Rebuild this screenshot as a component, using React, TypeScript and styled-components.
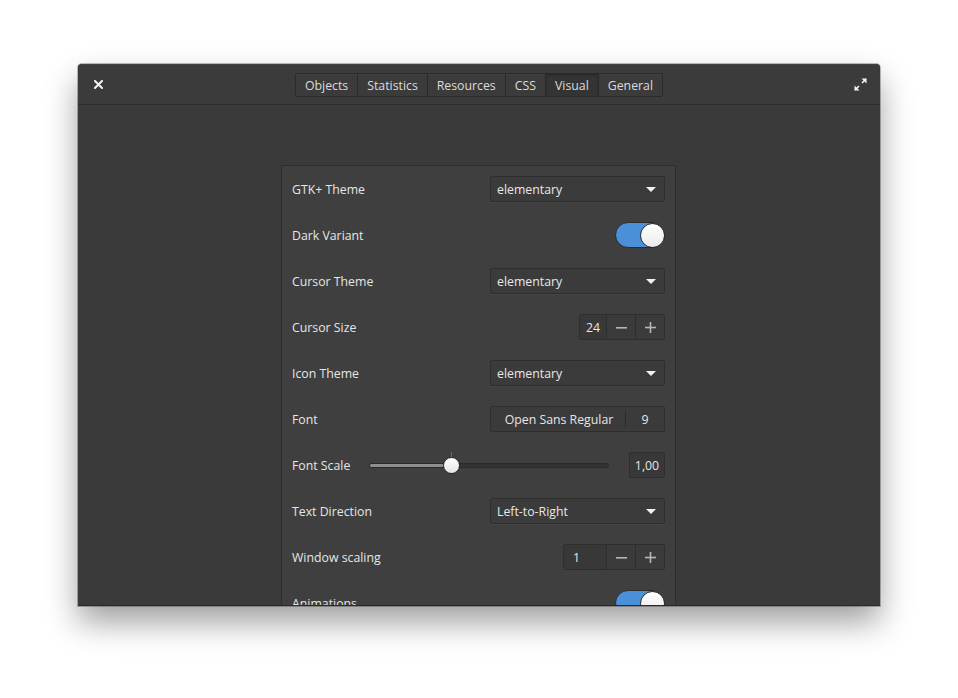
import React from "react";
import styled, { createGlobalStyle } from "styled-components";

const Global = createGlobalStyle`
  html, body { margin: 0; padding: 0; background: #ffffff; }
  body { font-family: "Open Sans", "Noto Sans", sans-serif; font-size: 12px; }
  * { box-sizing: border-box; }
`;

const Page = styled.div`
  width: 958px;
  height: 698px;
  padding: 64px 0 0 78px;
  overflow: hidden;
  background: #ffffff;
`;

const Window = styled.div`
  width: 802px;
  height: 542px;
  display: flex;
  flex-direction: column;
  background: #3a3a3a;
  border-radius: 4px 4px 0 0;
  border-bottom: 1px solid #2a2a2a;
  box-shadow: 0 16px 32px rgba(0, 0, 0, 0.38), 0 0 0 1px rgba(0, 0, 0, 0.25);
  overflow: hidden;
`;

const HeaderBar = styled.div`
  height: 41px;
  flex: none;
  display: grid;
  grid-template-columns: 40px 1fr 40px;
  align-items: center;
  background: #3b3b3b;
  border-bottom: 1px solid #2c2c2c;
  box-shadow: inset 0 1px 0 rgba(255, 255, 255, 0.04);
`;

const IconButton = styled.div`
  display: flex;
  align-items: center;
  justify-content: center;
  height: 40px;
  color: #f0f0f0;
`;

const Switcher = styled.div`
  justify-self: center;
  display: flex;
  height: 24px;
  margin-top: 2px;
  border: 1px solid #2b2b2b;
  border-radius: 2px;
  overflow: hidden;
`;

const Tab = styled.div<{ $active?: boolean }>`
  display: flex;
  align-items: center;
  padding: 0 9px;
  color: #dcdcdc;
  font-size: 12.3px;
  background: ${(p) => (p.$active ? "#343434" : "#3b3b3b")};
  box-shadow: ${(p) => (p.$active ? "inset 0 1px 2px rgba(0,0,0,0.25)" : "inset 0 1px 0 rgba(255,255,255,0.03)")};
  & + & { border-left: 1px solid #2b2b2b; }
`;

const Content = styled.div`
  flex: 1;
  display: flex;
  justify-content: center;
  padding: 60px 1px 0 0;
  background: #3a3a3a;
  overflow: hidden;
`;

const Panel = styled.div`
  width: 395px;
  align-self: flex-start;
  display: flex;
  flex-direction: column;
  gap: 20px;
  padding: 10px 10px 20px;
  background: #3f3f3f;
  border: 1px solid #2e2e2e;
  border-bottom: none;
`;

const Row = styled.div`
  height: 26px;
  display: flex;
  align-items: center;
  gap: 10px;
`;

const Label = styled.div`
  color: #e6e6e6;
  font-size: 12.3px;
  flex: 1;
  white-space: nowrap;
`;

const Combo = styled.div`
  width: 175px;
  height: 26px;
  display: flex;
  align-items: center;
  justify-content: space-between;
  padding: 0 6px 0 6px;
  background: #3b3b3b;
  border: 1px solid #2e2e2e;
  border-radius: 2px;
  color: #e8e8e8;
  font-size: 12.3px;
  box-shadow: 0 1px 0 rgba(255, 255, 255, 0.03);
`;

const Arrow = styled.span`
  width: 0;
  height: 0;
  margin-right: 2px;
  border-left: 5px solid transparent;
  border-right: 5px solid transparent;
  border-top: 5px solid #f2f2f2;
`;

const SwitchTrack = styled.div`
  width: 50px;
  height: 26px;
  border-radius: 13px;
  background: #4a90d9;
  border: 1px solid #2c2c2c;
  display: flex;
  justify-content: flex-end;
  align-items: center;
  padding: 0;
`;

const Knob = styled.div`
  width: 25px;
  height: 25px;
  border-radius: 50%;
  background: linear-gradient(#ffffff, #eaeaea);
  border: 1px solid #2a2a2a;
  margin-right: -1px;
`;

const Spin = styled.div`
  display: flex;
  height: 26px;
  border: 1px solid #2e2e2e;
  border-radius: 2px;
  background: #3b3b3b;
  color: #e8e8e8;
`;

const SpinEntry = styled.div<{ $w: number; $center?: boolean }>`
  width: ${(p) => p.$w}px;
  display: flex;
  align-items: center;
  justify-content: ${(p) => (p.$center ? "center" : "flex-start")};
  padding: 0 ${(p) => (p.$center ? "0" : "9px")};
  font-size: 12.3px;
  background: #383838;
`;

const SpinButton = styled.div`
  width: 29px;
  display: flex;
  align-items: center;
  justify-content: center;
  border-left: 1px solid #2e2e2e;
  color: #b5b5b5;
`;

const FontButton = styled.div`
  width: 175px;
  height: 26px;
  display: flex;
  border: 1px solid #2e2e2e;
  border-radius: 2px;
  background: #3b3b3b;
  color: #e6e6e6;
  font-size: 12.3px;
`;

const FontName = styled.div`
  flex: 1;
  display: flex;
  align-items: center;
  justify-content: center;
  padding-left: 1px;
  position: relative;
  &::after {
    content: "";
    position: absolute;
    right: 0;
    top: 4px;
    bottom: 4px;
    width: 1px;
    background: #2a2a2a;
  }
`;

const FontSize = styled.div`
  width: 38px;
  display: flex;
  align-items: center;
  justify-content: center;
`;

const SliderRow = styled.div`
  height: 26px;
  display: flex;
  align-items: center;
`;

const SliderLabel = styled.div`
  width: 77px;
  color: #e6e6e6;
  font-size: 12.3px;
  white-space: nowrap;
`;

const Slider = styled.div`
  width: 240px;
  height: 26px;
  position: relative;
  display: flex;
  align-items: center;
  margin-right: 20px;
`;

const Trough = styled.div`
  width: 100%;
  height: 5px;
  border-radius: 3px;
  background: #333333;
  border: 1px solid #2a2a2a;
  overflow: hidden;
`;

const Fill = styled.div`
  height: 100%;
  background: #8e8e8e;
`;

const SliderKnob = styled.div`
  position: absolute;
  top: 5px;
  width: 17px;
  height: 17px;
  border-radius: 50%;
  background: linear-gradient(#ffffff, #e4e4e4);
  border: 1px solid #2a2a2a;
  transform: translateX(-8px);
`;

const Mark = styled.div`
  position: absolute;
  top: 0;
  width: 1px;
  height: 8px;
  background: #6a6a6a;
`;

const ValueBox = styled.div`
  width: 36px;
  height: 26px;
  display: flex;
  align-items: center;
  justify-content: center;
  border: 1px solid #2e2e2e;
  border-radius: 2px;
  background: #383838;
  color: #e6e6e6;
  font-size: 12.3px;
`;

const Minus = () => (
  <svg width="11" height="11" viewBox="0 0 11 11">
    <rect x="0" y="5" width="11" height="1.6" fill="currentColor" />
  </svg>
);
const Plus = () => (
  <svg width="11" height="11" viewBox="0 0 11 11">
    <rect x="0" y="4.7" width="11" height="1.6" fill="currentColor" />
    <rect x="4.7" y="0" width="1.6" height="11" fill="currentColor" />
  </svg>
);

const CloseIcon = () => (
  <svg width="9" height="9" viewBox="0 0 9 9">
    <path d="M1 1 L8 8 M8 1 L1 8" stroke="#f2f2f2" strokeWidth="2" strokeLinecap="square" />
  </svg>
);

const MaxIcon = () => (
  <svg width="13" height="13" viewBox="0 0 13 13">
    <path d="M7.5 0.5 H12.5 V5.5 Z" fill="#f2f2f2" />
    <path d="M12 1 L8 5" stroke="#f2f2f2" strokeWidth="1.6" />
    <path d="M0.5 7.5 V12.5 H5.5 Z" fill="#f2f2f2" />
    <path d="M1 12 L5 8" stroke="#f2f2f2" strokeWidth="1.6" />
  </svg>
);

const ComboRow = ({ label, value }: { label: string; value: string }) => (
  <Row>
    <Label>{label}</Label>
    <Combo>
      <span>{value}</span>
      <Arrow />
    </Combo>
  </Row>
);

const SwitchRow = ({ label }: { label: string }) => (
  <Row>
    <Label>{label}</Label>
    <SwitchTrack>
      <Knob />
    </SwitchTrack>
  </Row>
);

const SpinRow = ({ label, value, w, center }: { label: string; value: string; w: number; center?: boolean }) => (
  <Row>
    <Label>{label}</Label>
    <Spin>
      <SpinEntry $w={w} $center={center}>{value}</SpinEntry>
      <SpinButton><Minus /></SpinButton>
      <SpinButton><Plus /></SpinButton>
    </Spin>
  </Row>
);

const tabs = ["Objects", "Statistics", "Resources", "CSS", "Visual", "General"];

export default function App() {
  const scale = 0.34;
  return (
    <>
      <Global />
      <Page>
        <Window>
          <HeaderBar>
            <IconButton><CloseIcon /></IconButton>
            <Switcher>
              {tabs.map((t) => (
                <Tab key={t} $active={t === "Visual"}>{t}</Tab>
              ))}
            </Switcher>
            <IconButton><MaxIcon /></IconButton>
          </HeaderBar>
          <Content>
            <Panel>
              <ComboRow label="GTK+ Theme" value="elementary" />
              <SwitchRow label="Dark Variant" />
              <ComboRow label="Cursor Theme" value="elementary" />
              <SpinRow label="Cursor Size" value="24" w={26} center />
              <ComboRow label="Icon Theme" value="elementary" />
              <Row>
                <Label>Font</Label>
                <FontButton>
                  <FontName>Open Sans Regular</FontName>
                  <FontSize>9</FontSize>
                </FontButton>
              </Row>
              <SliderRow>
                <SliderLabel>Font Scale</SliderLabel>
                <Slider>
                  <Trough>
                    <Fill style={{ width: `${scale * 100}%` }} />
                  </Trough>
                  <Mark style={{ left: `${scale * 100}%` }} />
                  <SliderKnob style={{ left: `${scale * 100}%` }} />
                </Slider>
                <ValueBox>1,00</ValueBox>
              </SliderRow>
              <ComboRow label="Text Direction" value="Left-to-Right" />
              <SpinRow label="Window scaling" value="1" w={42} />
              <SwitchRow label="Animations" />
            </Panel>
          </Content>
        </Window>
      </Page>
    </>
  );
}
